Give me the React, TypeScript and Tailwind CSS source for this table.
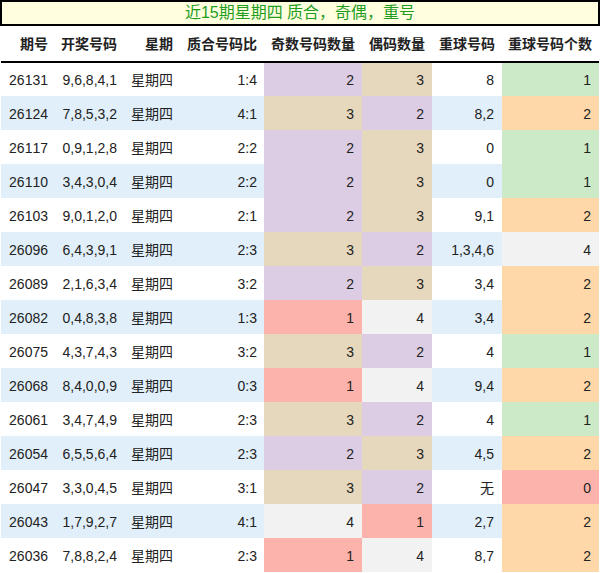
// 近15期星期四 质合 / 奇偶 / 重号 统计表
const rows = [
  { id: "26131", nums: "9,6,8,4,1", ratio: "1:4", odd: 2, even: 3, rep: "8", repCount: 1 },
  { id: "26124", nums: "7,8,5,3,2", ratio: "4:1", odd: 3, even: 2, rep: "8,2", repCount: 2 },
  { id: "26117", nums: "0,9,1,2,8", ratio: "2:2", odd: 2, even: 3, rep: "0", repCount: 1 },
  { id: "26110", nums: "3,4,3,0,4", ratio: "2:2", odd: 2, even: 3, rep: "0", repCount: 1 },
  { id: "26103", nums: "9,0,1,2,0", ratio: "2:1", odd: 2, even: 3, rep: "9,1", repCount: 2 },
  { id: "26096", nums: "6,4,3,9,1", ratio: "2:3", odd: 3, even: 2, rep: "1,3,4,6", repCount: 4 },
  { id: "26089", nums: "2,1,6,3,4", ratio: "3:2", odd: 2, even: 3, rep: "3,4", repCount: 2 },
  { id: "26082", nums: "0,4,8,3,8", ratio: "1:3", odd: 1, even: 4, rep: "3,4", repCount: 2 },
  { id: "26075", nums: "4,3,7,4,3", ratio: "3:2", odd: 3, even: 2, rep: "4", repCount: 1 },
  { id: "26068", nums: "8,4,0,0,9", ratio: "0:3", odd: 1, even: 4, rep: "9,4", repCount: 2 },
  { id: "26061", nums: "3,4,7,4,9", ratio: "2:3", odd: 3, even: 2, rep: "4", repCount: 1 },
  { id: "26054", nums: "6,5,5,6,4", ratio: "2:3", odd: 2, even: 3, rep: "4,5", repCount: 2 },
  { id: "26047", nums: "3,3,0,4,5", ratio: "3:1", odd: 3, even: 2, rep: "无", repCount: 0 },
  { id: "26043", nums: "1,7,9,2,7", ratio: "4:1", odd: 4, even: 1, rep: "2,7", repCount: 2 },
  { id: "26036", nums: "7,8,8,2,4", ratio: "2:3", odd: 1, even: 4, rep: "8,7", repCount: 2 },
];

// 奇偶数量的底色
const countBg: Record<number, string> = {
  1: "bg-[#fbb3ac]",
  2: "bg-[#dccce4]",
  3: "bg-[#e5d8bd]",
  4: "bg-[#f2f2f2]",
};

// 重号个数的底色
const repBg: Record<number, string> = {
  0: "bg-[#fbb3ac]",
  1: "bg-[#cce9c8]",
  2: "bg-[#fed8a8]",
  4: "bg-[#f2f2f2]",
};

const headers = ["期号", "开奖号码", "星期", "质合号码比", "奇数号码数量", "偶码数量", "重球号码", "重球号码个数"];

export default function App() {
  return (
    <div className="w-[600px] bg-white [font-family:'Liberation_Sans','Noto_Sans_CJK_SC',sans-serif] [font-kerning:none] text-[#222]">
      <div className="flex h-[26px] items-center justify-center border-2 border-black bg-[#ffffe0] text-[16px] text-[#1f9d1f]">
        近15期星期四 质合，奇偶，重号
      </div>
      <table className="ml-px w-[598px] table-fixed border-collapse text-[14px]">
        <colgroup>
          <col className="w-[54px]" />
          <col className="w-[69px]" />
          <col className="w-[56px]" />
          <col className="w-[84px]" />
          <col className="w-[98px]" />
          <col className="w-[70px]" />
          <col className="w-[70px]" />
          <col className="w-[97px]" />
        </colgroup>
        <thead>
          <tr className="h-[36px] border-b-2 border-black">
            {headers.map((h) => (
              <th key={h} className="whitespace-nowrap p-0 pt-[2px] pr-[7px] text-right font-bold">
                {h}
              </th>
            ))}
          </tr>
        </thead>
        <tbody>
          {rows.map((r, i) => {
            const stripe = i % 2 === 1 ? "bg-[#e1effa]" : "bg-white";
            return (
              <tr key={r.id} className={`h-[34px] ${stripe}`}>
                <td className="p-0 pt-[2px] pr-[7px] text-right">{r.id}</td>
                <td className="p-0 pt-[2px] pr-[7px] text-right">{r.nums}</td>
                <td className="p-0 pt-[2px] pr-[7px] text-right">星期四</td>
                <td className="p-0 pt-[2px] pr-[7px] text-right">{r.ratio}</td>
                <td className={`p-0 pt-[2px] pr-[8px] text-right ${countBg[r.odd]}`}>{r.odd}</td>
                <td className={`p-0 pt-[2px] pr-[8px] text-right ${countBg[r.even]}`}>{r.even}</td>
                <td className="p-0 pt-[2px] pr-[8px] text-right">{r.rep}</td>
                <td className={`p-0 pt-[2px] pr-[8px] text-right ${repBg[r.repCount]}`}>{r.repCount}</td>
              </tr>
            );
          })}
        </tbody>
      </table>
    </div>
  );
}
